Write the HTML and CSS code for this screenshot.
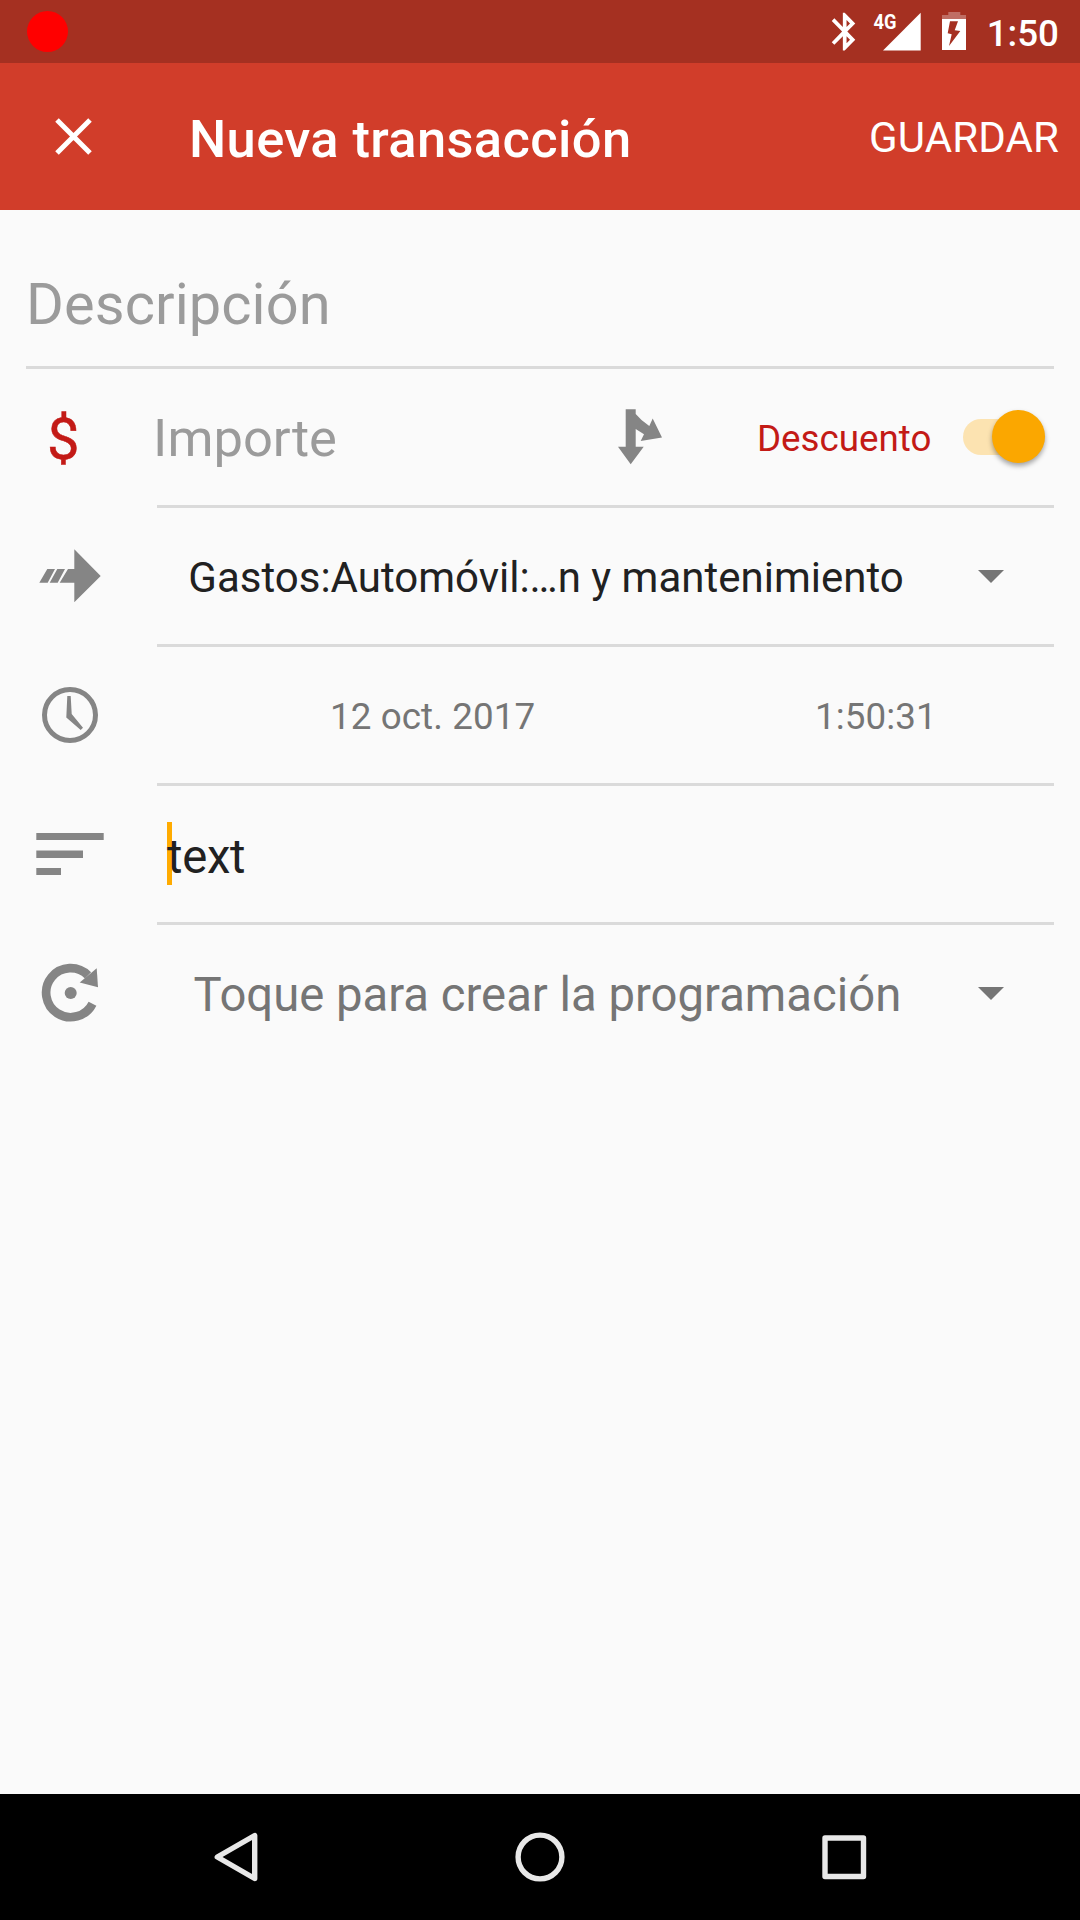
FILE: index.html
```html
<!DOCTYPE html>
<html lang="es">
<head>
<meta charset="utf-8">
<title>Nueva transacción</title>
<link rel="stylesheet" href="styles.css">
</head>
<body>
<div class="screen">
  <div class="status-bar">
    <span class="record-dot"></span>
    <svg class="status-icons" width="145" height="63" viewBox="0 0 145 63">
      <path fill="#fff" transform="translate(-6.500 8.900) scale(1.850 1.890)" d="M17.710 7.710L12 2h-1v7.590L6.410 5 5 6.410 10.590 12 5 17.590 6.410 19 11 14.410V22h1l5.710-5.710-4.300-4.290 4.300-4.290zM13 5.830l1.880 1.880L13 9.590V5.830zm1.880 10.460L13 18.170v-3.760l1.880 1.880z"/>
      <text class="network" x="44.6" y="29.3" textLength="23" lengthAdjust="spacingAndGlyphs">4G</text>
      <path d="M91.700 12.700V50.500H54z" fill="#fff"/>
      <path d="M113 19V15h6.300v-3h12v3H137v4z" fill="#fff" opacity=".3"/>
      <path fill-rule="evenodd" d="M113 19h24v31h-24zM121 21.300l-2.300 12 4 1-2.700 11.700L131.300 31l-5.600-.7 3.300-9z" fill="#fff"/>
    </svg>
    <span class="clock">1:50</span>
  </div>

  <header class="app-bar">
    <svg class="close" width="147" height="147" viewBox="0 0 147 147">
      <path d="M57 57 90 90M90 57 57 90" stroke="#fff" stroke-width="5"/>
    </svg>
    <h1 class="title">Nueva transacción</h1>
    <span class="save">GUARDAR</span>
  </header>

  <main class="form">
    <div class="description">Descripción</div>

    <div class="row">
      <div class="lead currency">$</div>
      <div class="field ruled">
        <span class="amount">Importe</span>
        <svg class="split" width="60" height="136" viewBox="0 0 60 136" fill="#858585">
          <path d="M15.700 40.300h10V45Q31 51.500 39.300 57L42.700 49.500 52 68.500 30.700 72 34 65.300 25.700 60V77.700h8L20.700 95.300 8 77.700h7.700z"/>
        </svg>
        <span class="type">Descuento</span>
        <span class="switch"><span class="thumb"></span></span>
      </div>
    </div>

    <div class="row">
      <svg class="lead" width="157" height="136" viewBox="0 0 157 136" fill="#858585">
        <path d="M74.300 41.300 100.700 68 74.300 94.300V74.800H59.700L68 61h6.300zM57.300 61H65L57.700 74.800h-8zM47.300 61H55L47.700 74.800h-8.400z"/>
      </svg>
      <div class="field ruled">
        <span class="account">Gastos:Automóvil:…n y mantenimiento</span>
        <svg class="caret" width="26" height="13" viewBox="0 0 26 13"><path d="M0 0h26L13 13z"/></svg>
      </div>
    </div>

    <div class="row">
      <svg class="lead" width="157" height="136" viewBox="0 0 157 136" fill="#858585">
        <circle cx="70" cy="68" r="25.500" fill="none" stroke="#858585" stroke-width="5"/>
        <path d="M67.300 49h3.400l1 18L83 80.700 80.700 83 66.300 70.500z"/>
      </svg>
      <div class="field ruled">
        <span class="date">12 oct. 2017</span>
        <span class="time">1:50:31</span>
      </div>
    </div>

    <div class="row">
      <svg class="lead" width="157" height="136" viewBox="0 0 157 136" fill="#858585">
        <path d="M36.300 47h67.400v7H36.300zM36.300 64.500H83V72H36.300zM36.300 82H61v7H36.300z"/>
      </svg>
      <div class="field ruled">
        <span class="cursor"></span><span class="note">text</span>
      </div>
    </div>

    <div class="row">
      <svg class="lead" width="157" height="136" viewBox="0 0 157 136" fill="#858585">
        <path d="M92.500 78.700A24.500 24.500 0 1 1 88 50.400" fill="none" stroke="#858585" stroke-width="8.700"/>
        <path d="M96.700 43.300 98 62.300 79.700 57.500z"/>
        <circle cx="70.700" cy="68" r="6"/>
      </svg>
      <div class="field">
        <span class="schedule">Toque para crear la programación</span>
        <svg class="caret" width="26" height="13" viewBox="0 0 26 13"><path d="M0 0h26L13 13z"/></svg>
      </div>
    </div>
  </main>

  <nav class="nav-bar">
    <svg width="60" height="60" viewBox="0 0 60 60"><path d="M48.700 8.500V51.500L11.300 30z"/></svg>
    <svg width="60" height="60" viewBox="0 0 60 60"><circle cx="30" cy="30" r="21.900"/></svg>
    <svg width="60" height="60" viewBox="0 0 60 60"><path d="M11 11h38.500v38.500H11z"/></svg>
  </nav>
</div>
</body>
</html>
```
FILE: styles.css
```css
* { box-sizing: border-box; }

body {
  margin: 0;
  font-family: Roboto, sans-serif;
  font-size: 36.75px;
  color: #212121;
}

.screen {
  display: flex;
  flex-direction: column;
  width: 1080px;
  height: 1920px;
  background: #fafafa;
  white-space: nowrap;
}

.status-bar {
  display: flex;
  align-items: center;
  flex: 0 0 63px;
  padding: 0 21px 0 26.6px;
  background: #a53021;
  color: #fff;
}

.record-dot {
  width: 41.4px;
  height: 41.4px;
  border-radius: 50%;
  background: #f00;
}

.status-icons { margin-left: auto; }

.network {
  font-size: 20.7px;
  font-weight: 700;
  fill: #fff;
}

.clock {
  margin-left: 12.3px;
  padding-top: 3px;
  font-weight: 500;
}

.app-bar {
  display: flex;
  align-items: center;
  flex: 0 0 147px;
  padding-right: 21px;
  background: #d13d2a;
  color: #fff;
}

.title {
  margin: 0 0 0 42px;
  padding-top: 4px;
  font-size: 52.5px;
  font-weight: 500;
  letter-spacing: .36px;
}

.save {
  margin-left: auto;
  padding-top: 2.4px;
  font-size: 42px;
  letter-spacing: .12px;
}

.form {
  flex: 1;
  padding: 0 26px;
}

.description {
  height: 159px;
  padding-top: 32.6px;
  border-bottom: 3px solid #dadada;
  font-size: 57.75px;
  line-height: 123.4px;
  letter-spacing: .1px;
  color: #9b9b9b;
}

.row {
  display: flex;
  height: 139px;
}

.lead {
  flex: 0 0 157px;
  margin-left: -26px;
}

.currency {
  padding: 2px 0 0 47px;
  font-size: 57.75px;
  line-height: 136px;
  color: #c31a16;
  -webkit-text-stroke: .5px #c31a16;
}

.field {
  display: flex;
  align-items: center;
  flex: 1;
  height: 139px;
  border-bottom: 3px solid transparent;
}

.ruled { border-bottom-color: #dadada; }

.amount {
  width: 456.9px;
  margin-left: -3.9px;
  padding-top: 2.6px;
  font-size: 52.5px;
  color: #9b9b9b;
}

.type {
  margin-left: 87px;
  padding-top: 3px;
  color: #c31a16;
}

.switch {
  display: flex;
  align-items: center;
  justify-content: flex-end;
  width: 82px;
  height: 36px;
  margin: 0 9px 0 auto;
  border-radius: 18px;
  background: #fce3b1;
}

.thumb {
  flex: none;
  width: 53px;
  height: 53px;
  margin-bottom: 1.4px;
  border-radius: 50%;
  background: #fba700;
  box-shadow: 0 3px 5px rgba(0, 0, 0, .35);
}

.account {
  margin-left: 31.3px;
  padding-top: 3.4px;
  font-size: 42px;
}

.caret {
  margin: 0 50px 0 auto;
  fill: #757575;
}

.date {
  width: 485px;
  margin-left: 173px;
  padding-top: 3px;
  letter-spacing: .1px;
  color: #757575;
}

.time {
  padding-top: 3px;
  letter-spacing: .1px;
  color: #757575;
}

.cursor {
  width: 5px;
  height: 63px;
  margin: 0 -5px 1px 10px;
  background: #ffab00;
}

.note {
  z-index: 1;
  padding-top: 5px;
  font-size: 47.25px;
  letter-spacing: -.3px;
}

.schedule {
  margin-left: 36.5px;
  padding-top: 4.6px;
  font-size: 47.25px;
  color: #757575;
}

.nav-bar {
  display: flex;
  align-items: center;
  justify-content: space-between;
  flex: 0 0 126px;
  padding: 0 206px;
  background: #000;
}

.nav-bar svg {
  fill: none;
  stroke: #e8e8e8;
  stroke-width: 5.4;
  stroke-linejoin: round;
}
```
